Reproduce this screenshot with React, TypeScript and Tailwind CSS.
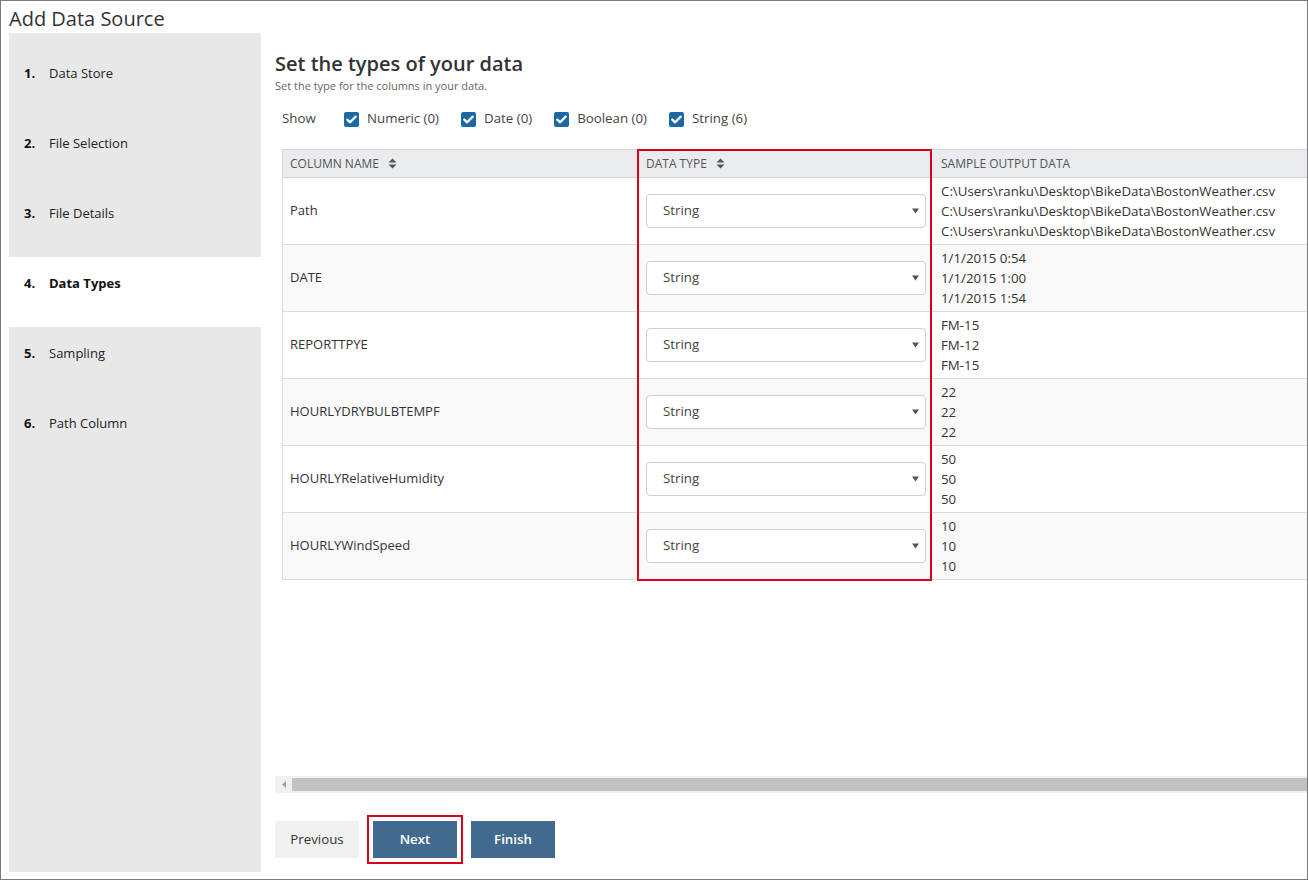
import React from "react";

const steps = [
  { n: "1.", label: "Data Store" },
  { n: "2.", label: "File Selection" },
  { n: "3.", label: "File Details" },
  { n: "4.", label: "Data Types", active: true },
  { n: "5.", label: "Sampling" },
  { n: "6.", label: "Path Column" },
];

const rows = [
  {
    name: "Path",
    samples: [
      "C:\\Users\\ranku\\Desktop\\BikeData\\BostonWeather.csv",
      "C:\\Users\\ranku\\Desktop\\BikeData\\BostonWeather.csv",
      "C:\\Users\\ranku\\Desktop\\BikeData\\BostonWeather.csv",
    ],
  },
  { name: "DATE", samples: ["1/1/2015 0:54", "1/1/2015 1:00", "1/1/2015 1:54"] },
  { name: "REPORTTPYE", samples: ["FM-15", "FM-12", "FM-15"] },
  { name: "HOURLYDRYBULBTEMPF", samples: ["22", "22", "22"] },
  { name: "HOURLYRelativeHumidity", samples: ["50", "50", "50"] },
  { name: "HOURLYWindSpeed", samples: ["10", "10", "10"] },
];

function SortIcon() {
  return (
    <svg width="9" height="11" viewBox="0 0 9 11" className="ml-[9px] inline-block">
      <path d="M4.5 0.5 L8.5 4.5 L0.5 4.5 Z" fill="#555" />
      <path d="M4.5 10.5 L8.5 6.5 L0.5 6.5 Z" fill="#555" />
    </svg>
  );
}

function Check({ label }: { label: string }) {
  return (
    <div className="flex items-center">
      <div className="w-[15px] h-[15px] rounded-[2px] bg-[#1c68a3] flex items-center justify-center">
        <svg width="11" height="9" viewBox="0 0 11 9">
          <path d="M1.3 4.6 L4.1 7.3 L9.7 1.6" stroke="#fff" strokeWidth="2.3" fill="none" strokeLinecap="round" strokeLinejoin="round" />
        </svg>
      </div>
      <span className="ml-[8px] text-[13.3px] text-[#444]">{label}</span>
    </div>
  );
}

export default function App() {
  return (
    <div
      className="w-[1308px] h-[880px] border border-[#7a7a7a] bg-white flex flex-col overflow-hidden text-[#222]"
      style={{ fontFamily: '"Open Sans", "Noto Sans", sans-serif' }}
    >
      <div className="h-[32px] pl-[8px] pt-[5px] text-[20px] leading-[26px] text-[#333] shrink-0">Add Data Source</div>
      <div className="flex flex-1 min-h-0">
        <div className="w-[252px] ml-[8px] mb-[7px] bg-[#e8e8e8] pt-[14px] shrink-0">
          {steps.map((s) => (
            <div
              key={s.n}
              className={`h-[70px] pt-[17px] pl-[15px] flex text-[13px] leading-[18px] ${s.active ? "bg-white" : ""}`}
            >
              <span className="w-[25px] font-bold text-[#111]">{s.n}</span>
              <span className={s.active ? "font-bold text-[#111]" : "text-[#222]"}>{s.label}</span>
            </div>
          ))}
        </div>
        <div className="flex-1 min-w-0 ml-[14px] flex flex-col">
          <div className="pt-[17px] text-[20px] leading-[28px] font-semibold text-[#333]">Set the types of your data</div>
          <div className="text-[11px] leading-[14px] pt-[1px] text-[#666]">Set the type for the columns in your data.</div>
          <div className="mt-[16px] ml-[7px] h-[20px] flex items-center">
            <span className="text-[13.3px] text-[#444] w-[62px]">Show</span>
            <div className="flex items-center gap-[22px]">
              <Check label="Numeric (0)" />
              <Check label="Date (0)" />
              <Check label="Boolean (0)" />
              <Check label="String (6)" />
            </div>
          </div>
          <div className="flex-1 min-h-0 mt-[20px] ml-[7px] overflow-hidden">
            <div className="relative w-[1150px] border-l border-[#dcdcdc]">
              <div className="flex h-[29px] bg-[#e9ebee] border-t border-b border-[#d4d6d9] text-[12px] text-[#555] items-center">
                <div className="w-[355px] pl-[7px] flex items-center">COLUMN NAME<SortIcon /></div>
                <div className="w-[294px] pl-[8px] flex items-center">DATA TYPE<SortIcon /></div>
                <div className="flex-1 pl-[9px]">SAMPLE OUTPUT DATA</div>
              </div>
              {rows.map((r, i) => (
                <div
                  key={r.name}
                  className={`flex h-[67px] items-center border-b border-[#dcdcdc] ${i % 2 === 1 ? "bg-[#f9f9f9]" : "bg-white"}`}
                >
                  <div className="w-[355px] pl-[7px] text-[13px] text-[#333]">{r.name}</div>
                  <div className="w-[294px] pl-[8px]">
                    <div className="w-[280px] h-[34px] border border-[#cfcfcf] rounded-[4px] bg-white flex items-center justify-between pl-[16px] pr-[6px]">
                      <span className="text-[13.3px] text-[#444]">String</span>
                      <svg width="7" height="6" viewBox="0 0 7 6">
                        <path d="M0 0.5 L7 0.5 L3.5 5.5 Z" fill="#555" />
                      </svg>
                    </div>
                  </div>
                  <div className="flex-1 pl-[9px] text-[13.3px] leading-[20px] text-[#333]">
                    {r.samples.map((s, j) => (
                      <div key={j}>{s}</div>
                    ))}
                  </div>
                </div>
              ))}
              <div className="absolute left-[354px] top-0 w-[295px] h-[432px] border-2 border-[#d9001b]" />
            </div>
          </div>
          <div className="h-[17px] bg-[#f0f0f0] flex items-center shrink-0">
            <div className="w-[17px] flex justify-center">
              <svg width="4" height="7" viewBox="0 0 4 7">
                <path d="M4 0 L4 7 L0 3.5 Z" fill="#a0a0a0" />
              </svg>
            </div>
            <div className="flex-1 h-[13px] bg-[#c1c1c1]" />
          </div>
          <div className="h-[86px] flex items-start pt-[28px] shrink-0">
            <button className="w-[84px] h-[37px] bg-[#f0f0f0] text-[13.3px] text-[#333]">Previous</button>
            <div className="ml-[8px] -mt-[6px] border-2 border-[#d9001b] p-[4px]">
              <button className="w-[84px] h-[37px] bg-[#426a8e] text-[13.3px] font-semibold text-white block">Next</button>
            </div>
            <button className="ml-[8px] w-[84px] h-[37px] bg-[#426a8e] text-[13.3px] font-semibold text-white">Finish</button>
          </div>
        </div>
      </div>
    </div>
  );
}
